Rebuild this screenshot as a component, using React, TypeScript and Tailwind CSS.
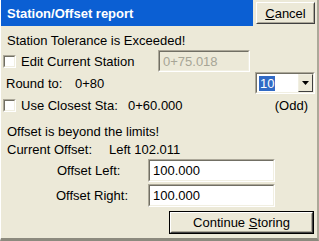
import React from "react";

function Sunken({ className = "", inner = "bg-white", children }: { className?: string; inner?: string; children?: React.ReactNode }) {
  return (
    <div className={`border border-t-[#aca899] border-l-[#aca899] border-b-white border-r-white ${className}`}>
      <div className={`w-full h-full border border-t-[#716f64] border-l-[#716f64] border-b-[#f1efe2] border-r-[#f1efe2] ${inner} flex items-center`}>
        {children}
      </div>
    </div>
  );
}

function Check() {
  return (
    <Sunken className="w-[13px] h-[13px] shrink-0" />
  );
}

function Button({ className = "", def = false, children }: { className?: string; def?: boolean; children: React.ReactNode }) {
  const inner = (
    <div className="w-full h-full border border-t-white border-l-white border-b-[#404040] border-r-[#404040] bg-[#ece9d8]">
      <div className="w-full h-full border border-t-[#ece9d8] border-l-[#ece9d8] border-b-[#aca899] border-r-[#aca899] flex items-center justify-center">
        {children}
      </div>
    </div>
  );
  return def ? <div className={`border border-black ${className}`}>{inner}</div> : <div className={className}>{inner}</div>;
}

export default function App() {
  return (
    <div className="w-[319px] h-[241px] bg-[#ece9d8] border-l border-l-white border-r-2 border-r-[#aca899] border-b-[3px] border-b-[#8c8a7e] font-['Liberation_Sans',sans-serif] text-[13px] text-black leading-none flex flex-col overflow-hidden">
      {/* title row */}
      <div className="flex h-[26px] shrink-0">
        <div className="w-[252px] h-[26px] bg-[#0b5fd3] text-white font-bold text-[13px] flex items-center pl-[6px]">
          Station/Offset report
        </div>
        <Button className="ml-[3px] mt-[2px] w-[59px] h-[22px]">
          <span><span className="underline">C</span>ancel</span>
        </Button>
      </div>

      <div className="h-[18px] mt-[5px] flex items-center pl-[6px] shrink-0">Station Tolerance is Exceeded!</div>

      <div className="h-[22px] mt-[1px] flex items-center shrink-0 pl-[2px]">
        <Check />
        <span className="ml-[5px]">Edit Current Station</span>
        <Sunken className="ml-auto mr-[67px] w-[92px] h-[22px]" inner="bg-[#ece9d8]">
          <span className="pl-[3px] text-[#a7a596]">0+75.018</span>
        </Sunken>
      </div>

      <div className="h-[22px] flex items-center shrink-0 pl-[5px]">
        <span className="w-[69px]">Round to:</span>
        <span>0+80</span>
        <Sunken className="ml-auto mr-[2px] w-[60px] h-[22px]">
          <span className="ml-[2px] bg-[#316ac5] text-white px-[1px] h-[15px] flex items-center">10</span>
          <div className="ml-auto w-[15px] h-[18px] border border-t-[#f1efe2] border-l-[#f1efe2] border-b-[#404040] border-r-[#404040] bg-[#ece9d8] flex items-center justify-center">
            <svg width="7" height="4" viewBox="0 0 7 4"><path d="M0 0h7L3.5 4z" fill="#000" /></svg>
          </div>
        </Sunken>
      </div>

      <div className="h-[18px] mt-[2px] flex items-center shrink-0 pl-[2px]">
        <Check />
        <span className="ml-[5px] w-[107px]">Use Closest Sta:</span>
        <span>0+60.000</span>
        <span className="ml-auto mr-[9px]">(Odd)</span>
      </div>

      <div className="h-[18px] mt-[8px] flex items-center pl-[6px] shrink-0">Offset is beyond the limits!</div>
      <div className="h-[18px] flex items-center pl-[6px] shrink-0">
        <span className="w-[102px]">Current Offset:</span>
        <span>Left 102.011</span>
      </div>

      <div className="h-[23px] mt-[1px] flex items-center shrink-0">
        <span className="w-[147px] pl-[56px]">Offset Left:</span>
        <Sunken className="w-[127px] h-[23px]"><span className="pl-[3px]">100.000</span></Sunken>
      </div>
      <div className="h-[23px] mt-[2px] flex items-center shrink-0">
        <span className="w-[147px] pl-[55px]">Offset Right:</span>
        <Sunken className="w-[127px] h-[23px]"><span className="pl-[3px]">100.000</span></Sunken>
      </div>

      <div className="h-[23px] mt-[4px] flex shrink-0">
        <Button def className="ml-[168px] w-[145px] h-[23px]">
          <span>Continue <span className="underline">S</span>toring</span>
        </Button>
      </div>
    </div>
  );
}
